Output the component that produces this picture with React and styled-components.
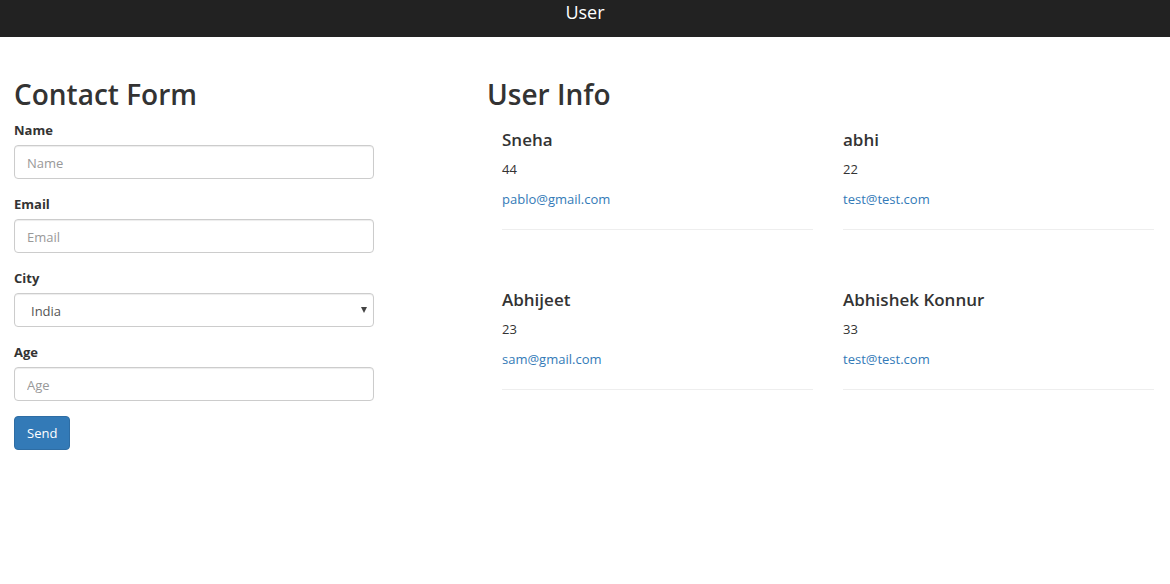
import React from "react";
import styled, { createGlobalStyle } from "styled-components";

const GlobalStyle = createGlobalStyle`
  *, *::before, *::after { box-sizing: border-box; }
  body {
    margin: 0;
    background: #fff;
    color: #333;
    font-family: "Segoe UI", "Open Sans", "Noto Sans", sans-serif;
    font-size: 13px;
    line-height: 20px;
  }
`;

const TopBar = styled.header`
  height: 37px;
  background: #222;
  color: #fff;
  text-align: center;
  font-size: 18px;
  line-height: 24px;
`;

const Page = styled.main`
  display: grid;
  grid-template-columns: minmax(0, 360fr) minmax(0, 667fr);
  column-gap: 113px;
  padding: 41px 16px 0 14px;
`;

const Title = styled.h1`
  margin: 0 0 10px;
  font-size: 28px;
  font-weight: 600;
  line-height: 32px;
`;

const Field = styled.div`
  display: flex;
  flex-direction: column;
  gap: 5px;
  margin-bottom: 15px;
`;

const Label = styled.label`
  font-size: 13px;
  font-weight: 700;
  line-height: 20px;
`;

const Input = styled.input`
  width: 100%;
  height: 34px;
  padding: 7px 12px 5px;
  border: 1px solid #ccc;
  border-radius: 4px;
  background: #fff;
  box-shadow: inset 0 1px 1px rgba(0, 0, 0, 0.075);
  color: #555;
  font: inherit;
  &::placeholder { color: #999; opacity: 1; }
`;

const SelectBox = styled.div`
  display: grid;
  align-items: center;
  > * { grid-area: 1 / 1; }
`;

const Select = styled.select`
  appearance: none;
  width: 100%;
  height: 34px;
  padding: 7px 16px 5px;
  border: 1px solid #ccc;
  border-radius: 4px;
  background: #fff;
  box-shadow: inset 0 1px 1px rgba(0, 0, 0, 0.075);
  color: #555;
  font: inherit;
`;

const Arrow = styled.svg`
  justify-self: end;
  margin-right: 7px;
  pointer-events: none;
`;

const SendButton = styled.button`
  height: 34px;
  padding: 0 12px;
  border: 1px solid #2e6da4;
  border-radius: 4px;
  background: #337ab7;
  color: #fff;
  font: inherit;
`;

const Users = styled.div`
  display: grid;
  grid-template-columns: repeat(2, minmax(0, 1fr));
  column-gap: 30px;
  row-gap: 50px;
  padding-left: 15px;
`;

const Card = styled.article`
  padding: 10px 0 20px;
  border-bottom: 1px solid #eee;
`;

const UserName = styled.h2`
  margin: 0 0 10px;
  font-size: 17px;
  font-weight: 600;
  line-height: 19px;
`;

const Age = styled.p`
  margin: 0 0 10px;
`;

const Email = styled.a`
  display: block;
  color: #337ab7;
  text-decoration: none;
`;

const users = [
  { name: "Sneha", age: 44, email: "pablo@gmail.com" },
  { name: "abhi", age: 22, email: "test@test.com" },
  { name: "Abhijeet", age: 23, email: "sam@gmail.com" },
  { name: "Abhishek Konnur", age: 33, email: "test@test.com" },
];

function TextField({ id, label, type = "text" }) {
  return (
    <Field>
      <Label htmlFor={id}>{label}</Label>
      <Input id={id} type={type} placeholder={label} />
    </Field>
  );
}

export default function App() {
  return (
    <>
      <GlobalStyle />
      <TopBar>User</TopBar>
      <Page>
        <form onSubmit={(e) => e.preventDefault()}>
          <Title>Contact Form</Title>
          <TextField id="name" label="Name" />
          <TextField id="email" label="Email" type="email" />
          <Field>
            <Label htmlFor="city">City</Label>
            <SelectBox>
              <Select id="city" defaultValue="India">
                <option>India</option>
              </Select>
              <Arrow width="6" height="6" viewBox="0 0 6 6" aria-hidden="true">
                <path d="M0 0h6L3 6z" fill="#444" />
              </Arrow>
            </SelectBox>
          </Field>
          <TextField id="age" label="Age" />
          <SendButton type="submit">Send</SendButton>
        </form>
        <section>
          <Title>User Info</Title>
          <Users>
            {users.map((user) => (
              <Card key={user.name}>
                <UserName>{user.name}</UserName>
                <Age>{user.age}</Age>
                <Email href={`mailto:${user.email}`}>{user.email}</Email>
              </Card>
            ))}
          </Users>
        </section>
      </Page>
    </>
  );
}
